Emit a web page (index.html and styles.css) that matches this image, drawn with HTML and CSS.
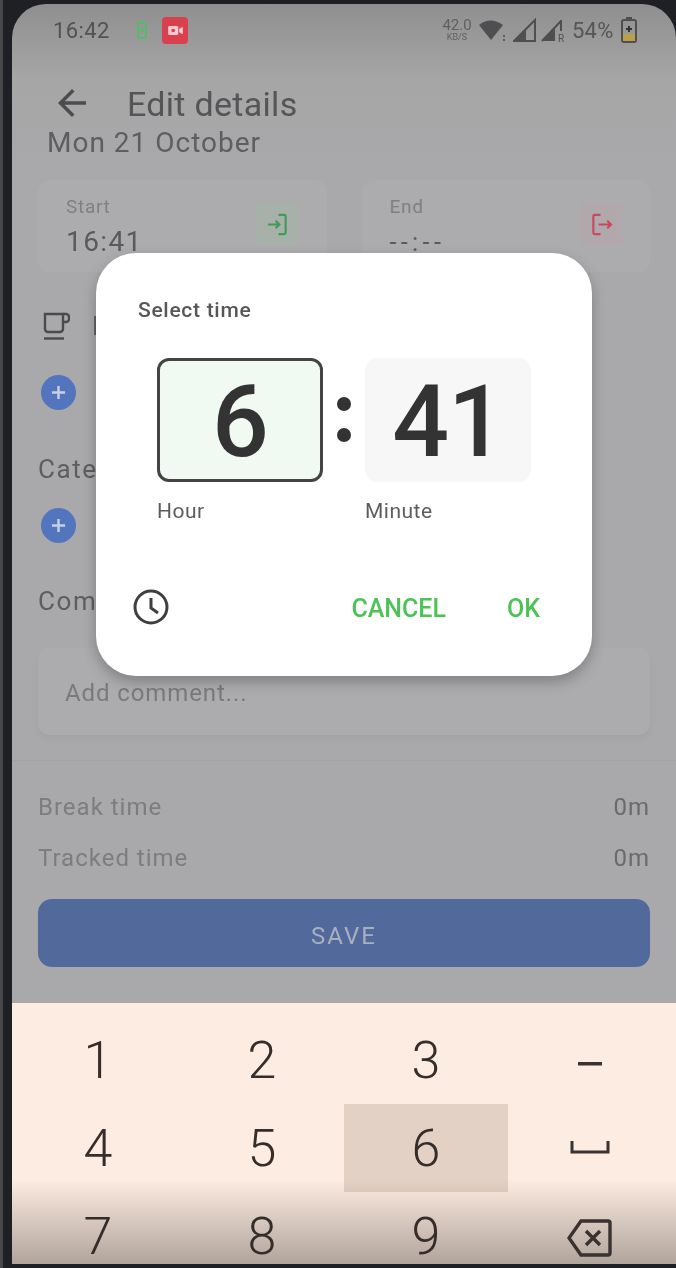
FILE: index.html
```html
<!DOCTYPE html>
<html lang="en">
<head>
    <meta charset="UTF-8">
    <meta name="viewport" content="width=device-width, initial-scale=1.0">
    <title>Edit details</title>
    <link rel="stylesheet" href="styles.css">
</head>
<body>
    <div class="phone">
        <div class="status-bar">
            <span class="clock">16:42</span>
            <svg class="mini-battery" viewBox="0 0 10 18"><rect x="1" y="2" width="8" height="15" rx="2" fill="none" stroke="#58b968" stroke-width="2"/><rect x="3.5" y="0" width="3" height="2" fill="#58b968"/><path d="M3 7l4 4M7 7l-4 4" stroke="#58b968" stroke-width="1.2"/></svg>
            <span class="rec-tile">
                <svg viewBox="0 0 16 12" width="15" height="11"><rect x="0" y="1" width="11" height="10" rx="1.5" fill="#f3c9cf"/><path d="M12 4l4-2v8l-4-2z" fill="#f3c9cf"/><circle cx="5.5" cy="6" r="2" fill="#d9414f"/></svg>
            </span>
            <div class="status-right">
                <span class="speed"><b>42.0</b><i>KB/S</i></span>
                <svg class="wifi" viewBox="0 0 28 24"><path d="M0 7Q11-2 24 7L12 22z" fill="#4f4f51"/><rect x="24" y="17" width="2" height="2" fill="#5b5b5d"/><rect x="24" y="21" width="2" height="2" fill="#5b5b5d"/></svg>
                <svg class="signal" viewBox="0 0 24 24"><path d="M1 23L22 2V23z" fill="none" stroke="#4f4f51" stroke-width="2"/><path d="M1 23L13 11V23z" fill="#4f4f51"/></svg>
                <svg class="signal second" viewBox="0 0 26 24"><path d="M1 23L20 3" stroke="#4f4f51" stroke-width="2"/><path d="M1 23L14 10V23z" fill="#4f4f51"/><path d="M20 2V13" stroke="#4f4f51" stroke-width="2"/><text x="17" y="24" class="roam">R</text></svg>
                <span class="percent">54%</span>
                <svg class="battery" viewBox="0 0 16 26"><rect x="1" y="3" width="14" height="22" rx="2" fill="none" stroke="#4f4f51" stroke-width="2"/><rect x="5" y="0" width="6" height="3" fill="#4f4f51"/><rect x="2" y="17" width="12" height="7" fill="#b8a04a"/><path d="M8 9v6M5 12h6" stroke="#333" stroke-width="2"/></svg>
            </div>
        </div>

        <div class="page">
            <header class="app-bar">
                <svg class="back" viewBox="4 4 16 16"><path d="M20 11H7.830l5.590-5.590L12 4l-8 8 8 8 1.410-1.410L7.830 13H20v-2z" fill="#4c4c4e"/></svg>
                <h1>Edit details</h1>
            </header>
            <p class="date">Mon 21 October</p>

            <div class="time-cards">
                <div class="time-card">
                    <div>
                        <span class="card-label">Start</span>
                        <span class="card-value">16:41</span>
                    </div>
                    <span class="card-icon green">
                        <svg viewBox="0 0 24 24" width="23" height="23" fill="none" stroke="#3f9c57" stroke-width="2.200"><path d="M13 2h6a1.500 1.500 0 0 1 1.500 1.500v17a1.500 1.500 0 0 1-1.500 1.500h-6"/><path d="M2 12h12M10 8l4 4-4 4"/></svg>
                    </span>
                </div>
                <div class="time-card">
                    <div>
                        <span class="card-label">End</span>
                        <span class="card-value empty">--:--</span>
                    </div>
                    <span class="card-icon red">
                        <svg viewBox="0 0 24 24" width="23" height="23" fill="none" stroke="#c9485f" stroke-width="2.200"><path d="M11 2H5a1.500 1.500 0 0 0-1.500 1.500v17A1.500 1.500 0 0 0 5 22h6"/><path d="M9 12h13M18 8l4 4-4 4"/></svg>
                    </span>
                </div>
            </div>

            <div class="break-row">
                <svg class="cup" viewBox="0 0 28 28" fill="none" stroke="#4a4a4c" stroke-width="2.400"><path d="M3 2h18v15a3 3 0 0 1-3 3H6a3 3 0 0 1-3-3z"/><path d="M21 2h3a3 3 0 0 1 3 3v2a3 3 0 0 1-3 3h-3"/><path d="M2 26.500h20"/></svg>
                <span class="section-title">Breaks</span>
            </div>
            <span class="add-button first"><svg viewBox="0 0 16 16" width="15" height="15"><path d="M8 1v14M1 8h14" stroke="#c6d0e6" stroke-width="2.600"/></svg></span>

            <h2 class="section-title categories">Categories</h2>
            <span class="add-button second"><svg viewBox="0 0 16 16" width="15" height="15"><path d="M8 1v14M1 8h14" stroke="#c6d0e6" stroke-width="2.600"/></svg></span>

            <h2 class="section-title comment">Comment</h2>
            <div class="comment-box">Add comment...</div>

            <div class="divider"></div>

            <div class="total-row break-total"><span>Break time</span><span class="total-value">0m</span></div>
            <div class="total-row tracked-total"><span>Tracked time</span><span class="total-value">0m</span></div>

            <button class="save-button">SAVE</button>
        </div>

        <div class="keyboard">
            <div class="key">1</div>
            <div class="key">2</div>
            <div class="key">3</div>
            <div class="key">
                <svg class="dash" viewBox="0 0 24 4" width="24" height="4"><rect width="24" height="3.500" fill="#3a3230"/></svg>
            </div>
            <div class="key">4</div>
            <div class="key">5</div>
            <div class="key pressed">6</div>
            <div class="key">
                <svg viewBox="0 0 40 14" width="40" height="14" fill="none" stroke="#3a3230" stroke-width="3"><path d="M2 0v11h36V0"/></svg>
            </div>
            <div class="key">7</div>
            <div class="key">8</div>
            <div class="key">9</div>
            <div class="key">
                <svg class="backspace" viewBox="0 0 46 38" width="46" height="38" fill="none" stroke="#3a3230" stroke-width="3.400"><path d="M14 2h27a2 2 0 0 1 2 2v30a2 2 0 0 1-2 2H14L2 19z"/><path d="M19 12l14 14M33 12L19 26"/></svg>
            </div>
        </div>

        <!-- dialog over the dimmed page -->
        <div class="time-dialog">
            <div class="dialog-title">Select time</div>
            <div class="time-inputs">
                <div class="time-field">
                    <div class="time-box active">6</div>
                    <span class="field-label">Hour</span>
                </div>
                <div class="time-colon"><i></i><i></i></div>
                <div class="time-field">
                    <div class="time-box">41</div>
                    <span class="field-label">Minute</span>
                </div>
            </div>
            <div class="dialog-actions">
                <svg class="mode-icon" viewBox="0 0 36 36" fill="none" stroke="#3f3f3f" stroke-width="3"><circle cx="18" cy="18" r="16"/><path d="M18 9v10l7 5"/></svg>
                <span class="action cancel">CANCEL</span>
                <span class="action">OK</span>
            </div>
        </div>
    </div>
</body>
</html>
```

FILE: styles.css
```css
* {
    box-sizing: border-box;
}

html, body {
    height: 100%;
}

body {
    margin: 0;
    padding: 4px 0 4px 12px;
    background: linear-gradient(to right, #48484a 3px, #1f2023 3px);
    font-family: Roboto, "Liberation Sans", sans-serif;
    overflow: hidden;
}

.phone {
    position: relative;
    height: 1260px;
    border-radius: 34px 34px 0 0;
    overflow: hidden;
    background: linear-gradient(#8f8f90, #a6a6a7 75px, #a9a9ab 180px);
    filter: blur(0.7px);
}

/* status bar */
.status-bar {
    display: flex;
    align-items: center;
    height: 52px;
    padding: 0 39px 0 41px;
}

.clock {
    width: 84px;
    font-size: 22px;
    letter-spacing: 0.4px;
    color: #525254;
}

.mini-battery {
    width: 10px;
    height: 18px;
}

.rec-tile {
    display: flex;
    align-items: center;
    justify-content: center;
    width: 26px;
    height: 27px;
    margin-left: 15px;
    border-radius: 4px;
    background: #d9414f;
}

.status-right {
    display: flex;
    align-items: center;
    margin-left: auto;
}

.speed {
    display: flex;
    flex-direction: column;
    align-items: center;
    width: 30px;
    margin-right: 7px;
    color: #5f5f61;
    line-height: 1;
}

.speed b {
    font-size: 15px;
    font-weight: 400;
}

.speed i {
    font-size: 9px;
    font-style: normal;
}

.wifi {
    width: 28px;
    height: 24px;
    margin-right: 6px;
}

.signal {
    width: 24px;
    height: 24px;
    margin-right: 4px;
}

.signal.second {
    width: 26px;
}

.roam {
    font-size: 10px;
    fill: #4f4f51;
}

.percent {
    width: 44px;
    margin-left: 1px;
    font-size: 22px;
    letter-spacing: 0.2px;
    color: #555557;
}

.battery {
    width: 16px;
    height: 26px;
    margin-left: 5px;
}

/* page behind the dialog */
.page {
    display: flex;
    flex-direction: column;
    align-items: flex-start;
    height: 947px;
    padding: 25px 26px 0;
}

.app-bar {
    display: flex;
    align-items: center;
    height: 44px;
    padding-left: 20px;
}

.back {
    width: 28px;
    height: 28px;
}

.app-bar h1 {
    margin: 2px 0 0 41px;
    font-size: 34px;
    font-weight: 400;
    letter-spacing: 0.3px;
    color: #555557;
}

.date {
    margin: 1px 0 -1px 9px;
    font-size: 28px;
    line-height: 34px;
    letter-spacing: 1px;
    color: #5e5e60;
}

.time-cards {
    display: flex;
    gap: 35px;
    width: 100%;
    margin-top: 21px;
}

.time-card {
    display: flex;
    justify-content: space-between;
    flex: 1;
    height: 92px;
    padding: 15px 27px 0 28px;
    border-radius: 12px;
    background: #acacae;
}

.card-label {
    display: block;
    font-size: 19px;
    line-height: 24px;
    letter-spacing: 0.7px;
    color: #808082;
}

.card-value {
    display: block;
    margin-top: 7px;
    font-size: 28px;
    line-height: 32px;
    letter-spacing: 1.400px;
    color: #5a5a5c;
}

.card-value.empty {
    margin-top: 8px;
    font-size: 25px;
    letter-spacing: 4.400px;
}

.card-icon {
    display: flex;
    align-items: center;
    justify-content: center;
    width: 44px;
    height: 44px;
    margin-top: 7px;
    border-radius: 6px;
}

.card-icon.green {
    background: #a8b0aa;
}

.card-icon.red {
    background: #b0a8aa;
}

.break-row {
    display: flex;
    align-items: center;
    gap: 22px;
    height: 28px;
    margin: 40px 0 0 4px;
}

.cup {
    width: 28px;
    height: 28px;
}

.section-title {
    margin: 0;
    font-size: 26px;
    font-weight: 400;
    line-height: 34px;
    letter-spacing: 1.600px;
    color: #5e5e60;
}

.add-button {
    display: flex;
    align-items: center;
    justify-content: center;
    width: 35px;
    height: 35px;
    margin-left: 3px;
    border-radius: 50%;
    background: #5275bd;
}

.add-button.first {
    margin-top: 35px;
}

.categories {
    margin-top: 42px;
}

.add-button.second {
    margin-top: 22px;
}

.comment {
    margin-top: 41px;
}

.comment-box {
    width: 100%;
    height: 87px;
    margin-top: 30px;
    padding: 28px 27px;
    border-radius: 12px;
    background: #acacae;
    font-size: 24px;
    line-height: 34px;
    letter-spacing: 0.9px;
    color: #7a7a7c;
    box-shadow: 0 4px 6px rgba(0, 0, 0, 0.04);
}

.divider {
    flex: none;
    width: calc(100% + 52px);
    height: 1px;
    margin: 25px -26px 0;
    background: #a3a3a5;
}

.total-row {
    display: flex;
    justify-content: space-between;
    width: 100%;
    font-size: 24px;
    line-height: 34px;
    letter-spacing: 1px;
    color: #7d7d7f;
}

.total-value {
    color: #6a6a6c;
}

.break-total {
    margin-top: 29px;
}

.tracked-total {
    margin-top: 17px;
}

.save-button {
    width: 100%;
    height: 68px;
    margin-top: 24px;
    padding-top: 7px;
    border: none;
    border-radius: 14px;
    background: #52699b;
    font-family: inherit;
    font-size: 24px;
    letter-spacing: 2px;
    color: #a8b0bf;
}

/* number pad */
.keyboard {
    display: grid;
    grid-template-columns: repeat(4, 164px);
    grid-auto-rows: 88px;
    justify-content: center;
    height: 261px;
    padding-top: 13px;
    overflow: hidden;
    background: linear-gradient(#fdece2 176px, #b1a49b);
}

.key {
    display: flex;
    align-items: center;
    justify-content: center;
    font-size: 52px;
    font-weight: 350;
    color: #352d2a;
}

.key.pressed {
    background: rgba(60, 30, 10, 0.13);
}

.dash {
    margin-top: 8px;
}

.backspace {
    margin-top: 4px;
}

/* time picker dialog */
.time-dialog {
    position: absolute;
    top: 249px;
    left: 84px;
    width: 496px;
    height: 423px;
    padding: 42px 0 0 42px;
    border-radius: 40px;
    background: #fff;
    box-shadow: 0 6px 14px rgba(0, 0, 0, 0.25);
}

.dialog-title {
    font-size: 21px;
    font-weight: 500;
    line-height: 30px;
    letter-spacing: 0.7px;
    color: #565656;
}

.time-inputs {
    display: flex;
    margin: 33px 0 0 19px;
}

.time-box {
    display: flex;
    align-items: center;
    justify-content: center;
    width: 166px;
    height: 124px;
    padding-top: 3px;
    border-radius: 12px;
    background: #f7f7f7;
    font-size: 100px;
    font-weight: 500;
    letter-spacing: -1px;
    color: #333;
}

.time-box.active {
    border: 3px solid #444;
    background: #f0faf3;
}

.field-label {
    display: block;
    margin-top: 15px;
    font-size: 21px;
    line-height: 28px;
    letter-spacing: 0.5px;
    color: #5c5c5c;
}

.time-colon {
    display: flex;
    flex-direction: column;
    align-items: center;
    gap: 17px;
    width: 42px;
    padding-top: 39px;
}

.time-colon i {
    width: 14px;
    height: 14px;
    border-radius: 50%;
    background: #333;
}

.dialog-actions {
    display: flex;
    align-items: center;
    margin: 64px 0 0 -5px;
}

.mode-icon {
    width: 36px;
    height: 36px;
}

.action {
    margin-top: 3px;
    font-size: 25px;
    font-weight: 500;
    color: #4cc257;
}

.cancel {
    margin-right: 61px;
    margin-left: auto;
}

.dialog-actions .action:last-child {
    margin-right: 52px;
}
```
